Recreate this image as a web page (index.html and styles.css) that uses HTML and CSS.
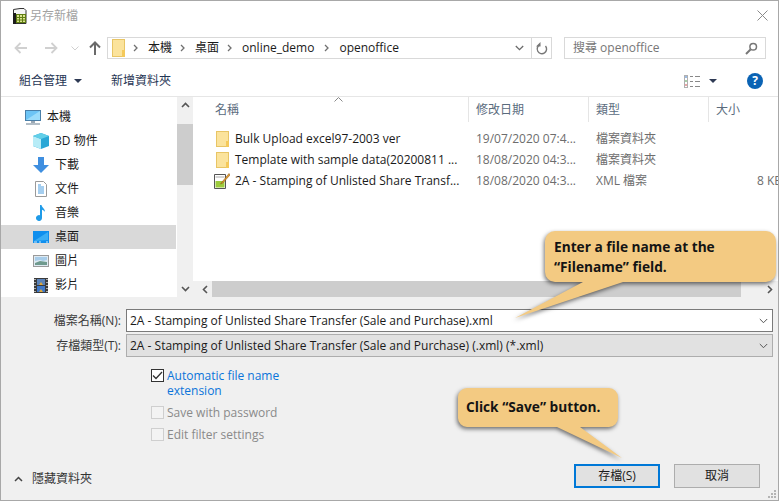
FILE: index.html
```html
<!DOCTYPE html>
<html lang="zh-Hant">
<head>
<meta charset="utf-8">
<title>另存新檔</title>
<link rel="stylesheet" href="styles.css">
</head>
<body>
<div class="dialog">
  <header class="titlebar">
    <svg class="app-icon" width="15" height="16" viewBox="0 0 15 16"><path d="M1.500 1.500L8 .5h4l2 2v13H1.500z" fill="#f4f4f4" stroke="#333"/><path d="M1 5h3v11H1z" fill="#1c1c1c"/><rect x="4.500" y="6.500" width="9" height="8" fill="#dbe58f" stroke="#5f7d12"/><path d="M7.500 6.500v8M10.500 6.500v8M4.500 9.500h9M4.500 12h9" stroke="#5f7d12"/></svg>
    <span class="title-text">另存新檔</span>
    <svg class="close-icon" width="11" height="11" viewBox="0 0 11 11"><path d="M.5.500l10 10M10.500.500l-10 10" stroke="#8a8a8a" fill="none"/></svg>
  </header>

  <nav class="navbar">
    <div class="nav-buttons">
      <svg class="nav-back" width="14" height="12" viewBox="0 0 14 12"><path d="M13 6H2M6.500 1L1.500 6l5 5" stroke="#d0d0d0" stroke-width="1.800" fill="none"/></svg>
      <svg class="nav-fwd" width="14" height="12" viewBox="0 0 14 12"><path d="M1 6h11M7.500 1l5 5-5 5" stroke="#d0d0d0" stroke-width="1.800" fill="none"/></svg>
      <svg class="nav-down" width="8" height="5" viewBox="0 0 8 5"><path d="M.5.500L4 4 7.500.500" stroke="#d0d0d0" fill="none"/></svg>
      <svg class="nav-up" width="12" height="14" viewBox="0 0 12 14"><path d="M6 14V2M1 6.500L6 1.500l5 5" stroke="#6a6a6a" stroke-width="2" fill="none"/></svg>
    </div>
    <div class="address">
      <svg class="crumb-folder" width="13" height="18" viewBox="0 0 13 18"><rect x=".5" y=".5" width="12" height="17" fill="#fbe39c" stroke="#e8c565"/><rect x="10" y="11" width="3" height="7" fill="#f4c95a"/></svg>
      <svg class="crumb-sep" width="5" height="8" viewBox="0 0 5 8"><path d="M1 1l3 3-3 3" stroke="#707070" stroke-width="1.300" fill="none"/></svg>
      <span class="crumb">本機</span>
      <svg class="crumb-sep" width="5" height="8" viewBox="0 0 5 8"><path d="M1 1l3 3-3 3" stroke="#707070" stroke-width="1.300" fill="none"/></svg>
      <span class="crumb">桌面</span>
      <svg class="crumb-sep" width="5" height="8" viewBox="0 0 5 8"><path d="M1 1l3 3-3 3" stroke="#707070" stroke-width="1.300" fill="none"/></svg>
      <span class="crumb crumb-wide">online_demo</span>
      <svg class="crumb-sep" width="5" height="8" viewBox="0 0 5 8"><path d="M1 1l3 3-3 3" stroke="#707070" stroke-width="1.300" fill="none"/></svg>
      <span class="crumb">openoffice</span>
      <svg class="address-arrow" width="9" height="6" viewBox="0 0 9 6"><path d="M.8 1l3.700 3.700L8.200 1" stroke="#6a6a6a" stroke-width="1.300" fill="none"/></svg>
      <span class="refresh">
        <svg width="12" height="13" viewBox="0 0 12 13"><path d="M4 2.700A4.700 4.700 0 1 0 9.500 4" stroke="#777" stroke-width="1.400" fill="none"/><path d="M7.500 .5v4.500H3z" fill="#777" transform="translate(-3 -.5)"/></svg>
      </span>
    </div>
    <div class="search">
      <span>搜尋 openoffice</span>
      <svg width="13" height="13" viewBox="0 0 13 13"><circle cx="8.200" cy="4.800" r="3.300" stroke="#777" stroke-width="1.500" fill="none"/><path d="M5.500 7.500L1 12" stroke="#777" stroke-width="2"/></svg>
    </div>
  </nav>

  <div class="toolbar">
    <span class="tool tool-organize">組合管理</span>
    <svg class="caret" width="8" height="4" viewBox="0 0 8 4"><path d="M0 0h8L4 4z" fill="#2e3a54"/></svg>
    <span class="tool tool-new">新增資料夾</span>
    <svg class="view-icon" width="16" height="13" viewBox="0 0 16 13"><rect x=".5" y=".5" width="3" height="12" fill="#fff" stroke="#b0b0b0"/><path d="M1 2h2" stroke="#3c78c8"/><path d="M1 6h2" stroke="#50a050"/><path d="M1 10h2" stroke="#d05050"/><path d="M6 1.500h3M11 1.500h5M6 6.500h3M11 6.500h5M6 11.500h3M11 11.500h5" stroke="#888"/></svg>
    <svg class="caret view-caret" width="8" height="4" viewBox="0 0 8 4"><path d="M0 0h8L4 4z" fill="#2e3a54"/></svg>
    <span class="help">?</span>
  </div>

  <main class="browser">
    <aside class="tree">
      <ul class="tree-list">
        <li class="tree-row tree-root">
          <svg width="16" height="15" viewBox="0 0 16 15"><rect x=".5" y=".5" width="15" height="10" fill="#6cc4f5" stroke="#4a7fa8"/><path d="M1 10L15 1v9z" fill="#9adcfb"/><rect x="6" y="11" width="4" height="2" fill="#9aa8b5"/><path d="M1 14h14" stroke="#9aa8b5" stroke-width="1.500"/></svg>
          本機</li>
        <li class="tree-row">
          <svg width="16" height="16" viewBox="0 0 16 16"><path d="M8 0l8 3v10l-8 3-8-3V3z" fill="#2aa7d6"/><path d="M0 3l8 3v10l-8-3z" fill="#b7ecf7"/><path d="M8 0l8 3-8 3-8-3z" fill="#62cfe8"/></svg>
          3D 物件</li>
        <li class="tree-row">
          <svg width="16" height="16" viewBox="0 0 16 16"><path d="M5 0h6v8h5l-8 8-8-8h5z" fill="#3f8fe0"/></svg>
          下載</li>
        <li class="tree-row">
          <svg width="16" height="16" viewBox="0 0 16 16"><path d="M2.500.5h8l3 3v12h-11z" fill="#fff" stroke="#9a9a9a"/><path d="M5 4h3M5 6h6M5 8h6M5 10h6M5 12h6" stroke="#4a9de0"/></svg>
          文件</li>
        <li class="tree-row">
          <svg width="16" height="16" viewBox="0 0 16 16"><path d="M7 0h1.500c.5 3 3.500 3.500 3.500 7-1-1.500-2-2-3-2.300V13a3 3 0 1 1-2-2.800z" fill="#1f9be8"/></svg>
          音樂</li>
        <li class="tree-row tree-selected">
          <svg width="16" height="12" viewBox="0 0 16 12"><rect width="16" height="12" fill="#0f8fee"/><path d="M1 10L15 1v8z" fill="#3aaef5"/><path d="M1 11h3M6 11h2M13 11h2" stroke="#cfe9fb"/></svg>
          桌面</li>
        <li class="tree-row">
          <svg width="16" height="12" viewBox="0 0 16 12"><rect x=".5" y=".5" width="15" height="11" fill="#dfeaf2" stroke="#9a9a9a"/><path d="M2 8l5-2 7 1v3H2z" fill="#6f9a8e"/><path d="M2 2h12v3l-4 1-3-1-5 1z" fill="#a8cdea"/></svg>
          圖片</li>
        <li class="tree-row">
          <svg width="14" height="15" viewBox="0 0 14 15"><rect width="14" height="15" fill="#3a3a3a"/><path d="M1 1v1M1 4v1M1 7v1M1 10v1M1 13v1M13 1v1M13 4v1M13 7v1M13 10v1M13 13v1" stroke="#ddd" stroke-width="1.400"/><rect x="3" y="1" width="8" height="6" fill="#5a82b8"/><rect x="3" y="8" width="8" height="6" fill="#3f78c8"/><path d="M5 7l2-3 2 3z" fill="#e0a83a"/><path d="M5 14l2-3 2 3z" fill="#e0a83a"/></svg>
          影片</li>
      </ul>
      <div class="vscroll">
        <svg class="vscroll-up" width="9" height="6" viewBox="0 0 9 6"><path d="M1 5l3.500-3.500L8 5" stroke="#555" stroke-width="1.600" fill="none"/></svg>
        <div class="vscroll-thumb"></div>
        <svg class="vscroll-down" width="9" height="6" viewBox="0 0 9 6"><path d="M1 1l3.500 3.500L8 1" stroke="#555" stroke-width="1.600" fill="none"/></svg>
      </div>
    </aside>

    <section class="files">
      <div class="file-head">
        <div class="col-name">名稱<svg class="sort" width="9" height="5" viewBox="0 0 9 5"><path d="M.5 4.500l4-4 4 4" stroke="#888" fill="none"/></svg></div>
        <div class="col col-sep">修改日期</div>
        <div class="col col-sep">類型</div>
        <div class="col col-sep">大小</div>
      </div>
      <div class="file-row">
        <div class="cell-name"><svg class="file-icon" width="13" height="16" viewBox="0 0 13 16"><rect x=".5" y=".5" width="12" height="15" fill="#fbe39c" stroke="#e8c565"/><rect x="10" y="10" width="3" height="6" fill="#f4c95a"/></svg>Bulk Upload excel97-2003 ver</div>
        <div class="cell-meta">19/07/2020 07:4...</div>
        <div class="cell-meta">檔案資料夾</div>
        <div class="cell-size"></div>
      </div>
      <div class="file-row">
        <div class="cell-name"><svg class="file-icon" width="13" height="16" viewBox="0 0 13 16"><rect x=".5" y=".5" width="12" height="15" fill="#fbe39c" stroke="#e8c565"/><rect x="10" y="10" width="3" height="6" fill="#f4c95a"/></svg>Template with sample data(20200811 ...</div>
        <div class="cell-meta">18/08/2020 04:3...</div>
        <div class="cell-meta">檔案資料夾</div>
        <div class="cell-size"></div>
      </div>
      <div class="file-row">
        <div class="cell-name"><svg class="file-icon doc-icon" width="16" height="16" viewBox="0 0 16 16"><path d="M.5 1.500h11v14H.5z" fill="#fff" stroke="#555"/><path d="M1.500 8h9v6.500h-9z" fill="#9ccb3c"/><path d="M1.500 4h9" stroke="#aaa"/><path d="M15 .5L8 9l-1.500 2 2.300-1L16 2z" fill="#e0a030" stroke="#8a4a10" stroke-width=".5"/></svg>2A - Stamping of Unlisted Share Transf...</div>
        <div class="cell-meta">18/08/2020 04:3...</div>
        <div class="cell-meta">XML 檔案</div>
        <div class="cell-size">8 KB</div>
      </div>
      <div class="hscroll">
        <svg class="hscroll-left" width="6" height="9" viewBox="0 0 6 9"><path d="M5 1L1.500 4.500 5 8" stroke="#555" stroke-width="1.600" fill="none"/></svg>
        <div class="hscroll-thumb"></div>
        <svg class="hscroll-right" width="6" height="9" viewBox="0 0 6 9"><path d="M1 1l3.500 3.500L1 8" stroke="#555" stroke-width="1.600" fill="none"/></svg>
      </div>
    </section>
  </main>

  <form class="panel">
    <div class="field-row">
      <label class="field-label">檔案名稱(N):</label>
      <div class="field field-input"><span>2A - Stamping of Unlisted Share Transfer (Sale and Purchase).xml</span>
        <svg width="9" height="6" viewBox="0 0 9 6"><path d="M.8 1l3.700 3.700L8.200 1" stroke="#555" fill="none"/></svg></div>
    </div>
    <div class="field-row">
      <label class="field-label">存檔類型(T):</label>
      <div class="field field-select"><span>2A - Stamping of Unlisted Share Transfer (Sale and Purchase) (.xml) (*.xml)</span>
        <svg width="9" height="6" viewBox="0 0 9 6"><path d="M.8 1l3.700 3.700L8.200 1" stroke="#555" fill="none"/></svg></div>
    </div>
    <div class="options">
      <div class="option option-on">
        <span class="check check-on"><svg width="11" height="9" viewBox="0 0 11 9"><path d="M1 4.500l3 3L10 1" stroke="#333" stroke-width="1.300" fill="none"/></svg></span>
        <span class="option-text">Automatic file name<br>extension</span>
      </div>
      <div class="option option-off"><span class="check"></span><span class="option-text">Save with password</span></div>
      <div class="option option-off"><span class="check"></span><span class="option-text">Edit filter settings</span></div>
    </div>
    <div class="panel-foot">
      <div class="hide-folders">
        <svg width="9" height="6" viewBox="0 0 9 6"><path d="M1 5l3.500-3.500L8 5" stroke="#444" stroke-width="1.500" fill="none"/></svg>
        <span>隱藏資料夾</span>
      </div>
      <div class="buttons">
        <button type="button" class="btn btn-primary">存檔(S)</button>
        <button type="button" class="btn">取消</button>
      </div>
    </div>
    <svg class="grip" width="8" height="8" viewBox="0 0 8 8"><path d="M6 0h2v2H6zM3 3h2v2H3zM6 3h2v2H6zM0 6h2v2H0zM3 6h2v2H3zM6 6h2v2H6z" fill="#b4b4b4"/></svg>
  </form>

  <div class="callout callout-name">
    <svg class="callout-shape" width="231" height="51" viewBox="0 0 231 51"><path d="M10 0H221a10 10 0 0 1 10 10V41a10 10 0 0 1-10 10H78L-30 87 38 51H10A10 10 0 0 1 0 41V10A10 10 0 0 1 10 0z" fill="#f3ca82"/></svg>
    <p class="callout-text">Enter a file name at the<br>“Filename” field.</p>
  </div>
  <div class="callout callout-save">
    <svg class="callout-shape" width="160" height="39" viewBox="0 0 160 39"><path d="M9 0H151a9 9 0 0 1 9 9V30a9 9 0 0 1-9 9H122L164 70 99 39H9A9 9 0 0 1 0 30V9A9 9 0 0 1 9 0z" fill="#f3ca82"/></svg>
    <p class="callout-text">Click “Save” button.</p>
  </div>
</div>
</body>
</html>
```

FILE: styles.css
```css
* { box-sizing: border-box; }
html, body { margin: 0; padding: 0; background: #fff; }
body {
  width: 779px;
  height: 501px;
  overflow: hidden;
  font: 12px/16px "Open Sans", "Noto Sans CJK TC", sans-serif;
  color: #1a1a1a;
}
svg { display: block; flex: none; }

.dialog {
  position: relative;
  width: 779px;
  height: 501px;
  display: flex;
  flex-direction: column;
  background: #fff;
  border: 1px solid #a8a8a8;
}

/* title bar */
.titlebar {
  height: 36px;
  flex: none;
  display: flex;
  align-items: flex-start;
  padding: 7px 0 0 11px;
}
.title-text { margin-left: 3px; color: #a2a2a2; }
.close-icon { margin: 2px 10px 0 auto; }

/* navigation */
.navbar {
  height: 22px;
  flex: none;
  display: flex;
  align-items: stretch;
}
.nav-buttons { width: 106px; display: flex; align-items: center; padding-left: 13px; }
.nav-fwd { margin-left: 16px; }
.nav-down { margin-left: 13px; }
.nav-up { margin-left: 10px; }
.address, .search {
  border: 1px solid #d9d9d9;
  display: flex;
  align-items: center;
}
.address { width: 445px; padding-left: 4px; }
.crumb-folder { margin-right: 8px; }
.crumb-sep { margin-right: 10px; }
.crumb { margin-right: 8px; color: #1a1a1a; }
.crumb-wide { margin-right: 10px; }
.address-arrow { margin-left: auto; margin-right: 7px; }
.refresh {
  width: 20px;
  height: 100%;
  border-left: 1px solid #d9d9d9;
  display: flex;
  align-items: center;
  justify-content: center;
}
.search {
  width: 202px;
  margin-left: 12px;
  padding: 0 7px 0 8px;
  justify-content: space-between;
  color: #777;
}

/* toolbar */
.toolbar {
  height: 38px;
  flex: none;
  display: flex;
  align-items: center;
  border-bottom: 1px solid #e6e6e6;
  padding: 7px 15px 0 18px;
}
.tool { color: #1f3554; }
.toolbar .caret { margin-left: 7px; }
.tool-new { margin-left: 29px; }
.view-icon { margin-left: auto; }
.toolbar .view-caret { margin-left: 9px; }
.help {
  margin-left: 30px;
  width: 16px;
  height: 16px;
  border-radius: 50%;
  background: #0a63b4;
  color: #fff;
  font: bold 12px/16px "Open Sans", sans-serif;
  text-align: center;
}

/* browser */
.browser {
  height: 200px;
  flex: none;
  display: flex;
}
.tree { width: 192px; flex: none; display: flex; }
.tree-list {
  list-style: none;
  margin: 0 1px 0 0;
  padding: 8px 0 0;
  width: 175px;
  flex: none;
  overflow: hidden;
}
.tree-row {
  height: 24px;
  display: flex;
  align-items: center;
  padding-left: 32px;
  gap: 6px;
}
.tree-row svg { width: 16px; }
.tree-root { padding-left: 24px; }
.tree-selected { background: #d9d9d9; }

.vscroll {
  width: 16px;
  flex: none;
  background: #f0f0f0;
  display: flex;
  flex-direction: column;
  align-items: center;
  padding-top: 5px;
}
.vscroll-thumb { width: 16px; height: 61px; background: #cdcdcd; margin-top: 16px; }
.vscroll-down { margin-top: auto; margin-bottom: 5px; }

.files { flex: 1; min-width: 0; display: flex; flex-direction: column; overflow: hidden; }
.file-head {
  height: 25px;
  flex: none;
  display: grid;
  grid-template-columns: 275px 120px 120px 1fr;
  margin-bottom: 6px;
  color: #5a6b7d;
}
.col-name { padding: 5px 0 0 22px; position: relative; }
.sort { position: absolute; left: 141px; top: 0; }
.col { padding: 5px 0 0 7px; }
.col-sep { border-left: 1px solid #e5e5e5; }
.file-row {
  height: 21px;
  flex: none;
  display: grid;
  grid-template-columns: 275px 120px 120px 1fr;
  align-items: center;
  white-space: nowrap;
}
.cell-name { display: flex; align-items: center; padding-left: 23px; gap: 6px; color: #1a1a1a; }
.doc-icon { margin-left: -2px; margin-right: -1px; }
.cell-meta { padding-left: 8px; color: #6d6d6d; }
.cell-size { padding-left: 49px; color: #6d6d6d; }

.hscroll {
  margin-top: auto;
  height: 16px;
  flex: none;
  display: flex;
  align-items: center;
  background: #f0f0f0;
  padding-left: 9px;
}
.hscroll-thumb { width: 529px; height: 16px; margin-left: 4px; background: #cdcdcd; }
.hscroll-right { margin-left: auto; margin-right: 5px; }

/* bottom panel */
.panel {
  flex: 1;
  min-height: 0;
  display: flex;
  flex-direction: column;
  position: relative;
  background: #f0f0f0;
  padding: 12px 0 0 0;
}
.field-row { display: flex; align-items: center; margin-bottom: 2px; }
.field-label { width: 125px; flex: none; padding-right: 5px; text-align: right; color: #3a3a3a; white-space: nowrap; }
.field {
  width: 647px;
  height: 23px;
  display: flex;
  align-items: center;
  justify-content: space-between;
  padding: 0 4px 0 3px;
  white-space: nowrap;
}
.field-input { background: #fff; border: 1px solid #7a7a7a; }
.field-select { background: #e1e1e1; border: 1px solid #adadad; }

.options { margin: 9px 0 0 150px; display: flex; flex-direction: column; }
.option { display: flex; align-items: flex-start; gap: 3px; }
.option-text { line-height: 15px; }
.option-on { color: #0a74da; height: 37px; }
.option-off { color: #8a8a8a; height: 22px; }
.check {
  width: 13px;
  height: 13px;
  flex: none;
  border: 1px solid #cfcfcf;
  background: #f3f3f3;
  margin-top: 1px;
  display: flex;
  align-items: center;
  justify-content: center;
}
.check-on { border-color: #333; background: #fff; }

.panel-foot {
  display: flex;
  justify-content: space-between;
  align-items: center;
  margin-top: auto;
  margin-bottom: 12px;
  padding-left: 13px;
  padding-right: 18px;
}
.hide-folders { display: flex; align-items: center; gap: 9px; color: #333; margin-top: 5px; }
.buttons { display: flex; gap: 14px; }
.btn {
  width: 86px;
  height: 24px;
  background: #e1e1e1;
  border: 1px solid #adadad;
  font: inherit;
  color: #1a1a1a;
  padding: 0;
}
.btn-primary { border: 2px solid #0078d7; }
.grip { position: absolute; right: 2px; bottom: 2px; }

/* annotation callouts */
.callout { position: absolute; margin: 0; }
.callout-name { left: 544px; top: 230px; width: 231px; height: 51px; }
.callout-save { left: 457px; top: 387px; width: 160px; height: 39px; }
.callout-shape {
  position: absolute;
  left: 0;
  top: 0;
  overflow: visible;
  filter: drop-shadow(-1px 2px 2px rgba(0, 0, 0, .55));
}
.callout-text {
  position: relative;
  margin: 0;
  font: bold 13.700px/20px "Open Sans", sans-serif;
  color: #141414;
  white-space: nowrap;
}
.callout-name .callout-text { padding: 6px 0 0 9px; }
.callout-save .callout-text { padding: 9px 0 0 8px; }
```
